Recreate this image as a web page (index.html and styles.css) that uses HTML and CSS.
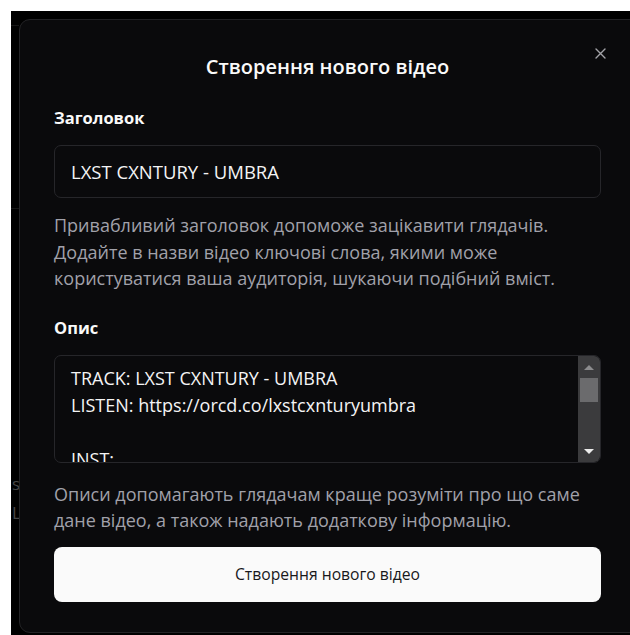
FILE: index.html
```html
<!DOCTYPE html>
<html lang="uk">
<head>
<meta charset="utf-8">
<title>Створення нового відео</title>
<link rel="stylesheet" href="styles.css">
</head>
<body>
<div class="page">
  <div class="page-edge">
    <div class="edge-rule edge-rule-top"></div>
    <div class="edge-rule edge-rule-mid"></div>
    <div class="edge-text edge-text-1">s</div>
    <div class="edge-text edge-text-2">L</div>
  </div>
  <div class="dialog">
    <button class="close" aria-label="Закрити">
      <svg width="11" height="11" viewBox="0 0 11 11"><path d="M1 1L10 10M10 1L1 10" stroke="currentColor" stroke-width="1.4" stroke-linecap="round"/></svg>
    </button>
    <div class="content">
      <h2 class="title">Створення нового відео</h2>

      <label class="label label-first">Заголовок</label>
      <div class="input">LXST CXNTURY - UMBRA</div>
      <p class="hint hint-first">Привабливий заголовок допоможе зацікавити глядачів. Додайте в назви відео ключові слова, якими може користуватися ваша аудиторія, шукаючи подібний вміст.</p>

      <label class="label label-second">Опис</label>
      <div class="textarea">
        <div class="textarea-text">TRACK: LXST CXNTURY - UMBRA<br>LISTEN: https://orcd.co/lxstcxnturyumbra<br><br>INST:</div>
        <div class="scrollbar">
          <span class="arrow arrow-up"></span>
          <span class="thumb-area"><span class="thumb"></span></span>
          <span class="arrow arrow-down"></span>
        </div>
      </div>
      <p class="hint hint-second">Описи допомагають глядачам краще розуміти про що саме дане відео, а також надають додаткову інформацію.</p>

      <button class="submit">Створення нового відео</button>
    </div>
  </div>
</div>
</body>
</html>
```

FILE: styles.css
```css
html, body {
  margin: 0;
  padding: 0;
  overflow: hidden;
  background: #ffffff;
  font-family: "Open Sans", "Noto Sans", sans-serif;
}

.page {
  margin: 11px 0 0 11px;
  height: 624px;
  background: #000000;
  display: flex;
  position: relative;
}

.page-edge {
  width: 8px;
  flex: none;
  position: relative;
  overflow: hidden;
}

.edge-rule {
  position: absolute;
  left: 0;
  right: 0;
  height: 1px;
  background: #161616;
}
.edge-rule-top { top: 14px; }
.edge-rule-mid { top: 197px; }

.edge-text {
  position: absolute;
  left: 1px;
  font-size: 17px;
  color: #474747;
}
.edge-text-1 { top: 461px; }
.edge-text-2 { top: 490px; }

.dialog {
  margin-top: 8px;
  width: 640px;
  height: 614px;
  flex: none;
  box-sizing: border-box;
  background: #0a0a0c;
  border: 1px solid #232326;
  border-radius: 11px;
  position: relative;
}

.close {
  position: absolute;
  top: 28px;
  left: 575px;
  padding: 0;
  border: 0;
  background: none;
  color: #a3a3a8;
  display: flex;
}

.content {
  width: 547px;
  margin-left: 34px;
  padding-top: 33px;
  display: flex;
  flex-direction: column;
}

.title {
  margin: 0;
  text-align: center;
  font-size: 20px;
  line-height: 28px;
  font-weight: 600;
  color: #fafafa;
}

.label {
  font-size: 16.5px;
  line-height: 20px;
  font-weight: 700;
  color: #fafafa;
}
.label-first { margin-top: 27px; }
.label-second { margin-top: 26px; }

.input {
  margin-top: 17px;
  height: 53px;
  box-sizing: border-box;
  border: 1px solid #26262a;
  border-radius: 7px;
  padding: 0 16px;
  display: flex;
  align-items: center;
  font-size: 18.5px;
  color: #f4f4f5;
}

.hint {
  margin: 0;
  font-size: 18px;
  line-height: 26.5px;
  color: #a1a1aa;
}
.hint-first {
  margin-top: 14px;
  max-width: 520px;
}
.hint-second { margin-top: 18px; }

.textarea {
  margin-top: 17px;
  height: 108px;
  box-sizing: border-box;
  border: 1px solid #26262a;
  border-radius: 7px;
  display: flex;
  overflow: hidden;
}

.textarea-text {
  flex: 1;
  padding: 9px 16px 0;
  font-size: 18px;
  line-height: 27px;
  color: #f4f4f5;
  overflow: hidden;
}

.scrollbar {
  width: 22px;
  flex: none;
  background: #3b3b3d;
  display: flex;
  flex-direction: column;
  align-items: center;
}

.arrow {
  width: 0;
  height: 0;
  border-left: 5px solid transparent;
  border-right: 5px solid transparent;
}
.arrow-up {
  margin-top: 9px;
  border-bottom: 5px solid #8c8c8e;
}
.arrow-down {
  margin-bottom: 8px;
  border-top: 5px solid #ececec;
}

.thumb-area {
  flex: 1;
  width: 100%;
  display: flex;
  justify-content: center;
  padding-top: 8px;
}

.thumb {
  width: 18px;
  height: 24px;
  background: #6b6b6d;
}

.submit {
  margin-top: 13px;
  height: 55px;
  border: 0;
  border-radius: 8px;
  background: #fafafa;
  color: #18181b;
  font-family: inherit;
  font-size: 15.7px;
}
```
